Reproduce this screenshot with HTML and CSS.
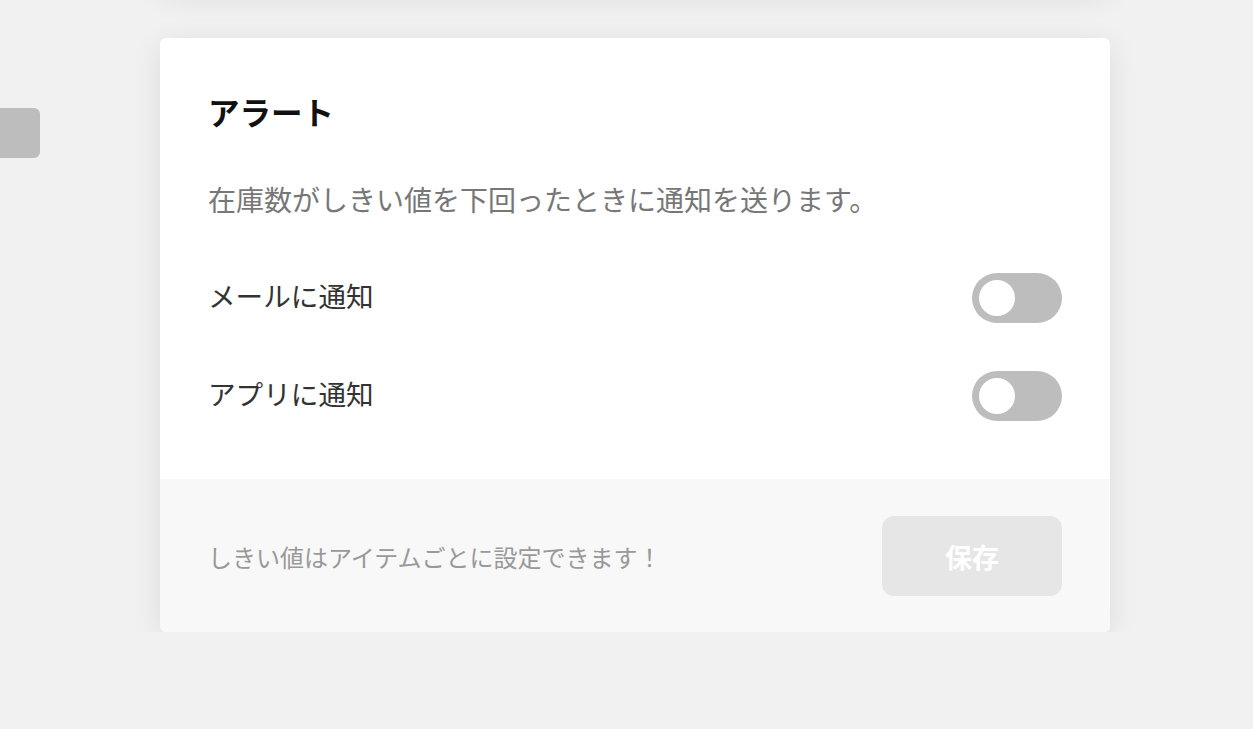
FILE: index.html
```html
<!DOCTYPE html>
<html lang="ja">
  <head>
    <meta charset="UTF-8" />
    <meta name="viewport" content="width=device-width, initial-scale=1.0" />
    <title>アラート設定</title>
    <link rel="stylesheet" href="styles.css">
  </head>
  <body>
    <div class="layout">
      <aside class="rail">
        <div class="rail-tab"></div>
      </aside>
      <main class="settings">
        <section class="card card-prev"></section>

        <section class="card">
          <div class="card-body">
            <h2>アラート</h2>
            <p class="desc">在庫数がしきい値を下回ったときに通知を送ります。</p>
            <div class="row">
              <span class="row-label">メールに通知</span>
              <button class="toggle" aria-label="メールに通知"><span class="knob"></span></button>
            </div>
            <div class="row">
              <span class="row-label">アプリに通知</span>
              <button class="toggle" aria-label="アプリに通知"><span class="knob"></span></button>
            </div>
          </div>
          <div class="card-footer">
            <span class="hint">しきい値はアイテムごとに設定できます！</span>
            <button class="btn" disabled>保存</button>
          </div>
        </section>
      </main>
    </div>
  </body>
</html>
```

FILE: styles.css
```css
body {
  font-family: "Noto Sans CJK JP", "Noto Sans", sans-serif;
  margin: 0;
  padding: 0;
  background-color: #f1f1f1;
  overflow: hidden;
}

.layout {
  display: flex;
  align-items: flex-start;
}

.rail {
  width: 40px;
  flex-shrink: 0;
  padding-top: 108px;
}

.rail-tab {
  height: 50px;
  background: #bdbdbd;
  border-radius: 0 6px 6px 0;
}

.settings {
  display: flex;
  flex-direction: column;
  gap: 48px;
  margin-left: 120px;
  margin-top: -210px;
}

.card {
  width: 950px;
  background: white;
  border-radius: 6px;
  box-shadow: 0 6px 30px rgba(0, 0, 0, 0.09);
  overflow: hidden;
}

.card-prev {
  height: 200px;
}

.card-body {
  padding: 48px 48px 34px;
}

.card-body h2 {
  margin: 0;
  font-size: 31.5px;
  line-height: 51px;
  font-weight: 700;
  color: #111;
}

.desc {
  margin: 41px 0 28px;
  font-size: 28px;
  line-height: 43px;
  color: #777;
}

.row {
  display: flex;
  align-items: center;
  justify-content: space-between;
  padding: 24px 0;
}

.row-label {
  font-size: 27.6px;
  padding-bottom: 6px;
  color: #333;
}

.toggle {
  width: 90px;
  height: 50px;
  padding: 7px;
  border: none;
  border-radius: 25px;
  background: #bdbdbd;
  display: flex;
  align-items: center;
  cursor: pointer;
}

.knob {
  width: 36px;
  height: 36px;
  border-radius: 50%;
  background: white;
}

.card-footer {
  display: flex;
  align-items: center;
  justify-content: space-between;
  padding: 37px 48px 36px;
  background: #f8f8f8;
}

.hint {
  font-size: 24px;
  color: #999;
}

.btn {
  width: 180px;
  height: 80px;
  border: none;
  border-radius: 12px;
  background: #e6e6e6;
  color: white;
  font-family: inherit;
  font-size: 27px;
  font-weight: 700;
}
```
